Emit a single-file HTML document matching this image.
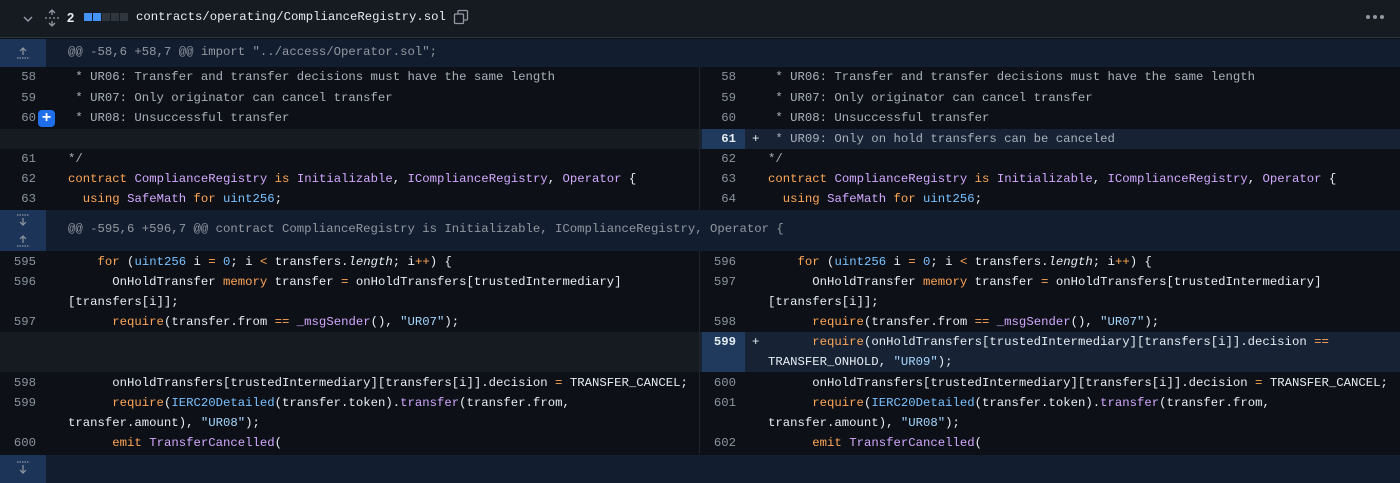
<!DOCTYPE html>
<html><head><meta charset="utf-8"><style>
*{margin:0;padding:0;box-sizing:border-box}
body{width:1400px;height:483px;background:#0d1117;overflow:hidden;font-family:"Liberation Mono",monospace;font-size:12.3px;color:#e6edf3;position:relative}
.hdr{position:absolute;left:0;top:0;width:1400px;height:38px;background:#161b22;border-bottom:1px solid #30363d}
.hunk{position:absolute;left:0;width:1400px;background:#121d2f;color:#9198a1}
.hunk .g{position:absolute;left:0;top:0;bottom:0;width:46px;background:#1b3458}
.hunk .t{position:absolute;left:68px;}
.r{position:absolute;height:20px;line-height:20px;white-space:pre}
.ln{position:absolute;text-align:right;color:#8b949e;white-space:pre;height:20px;line-height:20px}
.k{color:#ffa657}.p{color:#d2a8ff}.b{color:#79c0ff}.s{color:#a5d6ff}.c{color:#a9b1ba}.i{font-style:italic}
.div{position:absolute;left:699px;width:1px;background:#21262d}
</style></head><body>
<div class="hdr">
 <svg style="position:absolute;left:22px;top:13px" width="12" height="12" viewBox="0 0 12 12"><path d="M2 4l4 4 4-4" stroke="#9198a1" stroke-width="1.5" fill="none"/></svg>
 <svg style="position:absolute;left:44px;top:9px" width="16" height="18" viewBox="0 0 16 18"><path d="M8 1v5M5 4l3-3 3 3M8 17v-5M5 14l3 3 3-3" stroke="#9198a1" stroke-width="1.3" fill="none"/><path d="M1 9h2M5 9h2M9 9h2M13 9h2" stroke="#9198a1" stroke-width="1.3"/></svg>
 <span style="position:absolute;left:67px;top:10px;font-family:'Liberation Sans',sans-serif;font-size:13px;font-weight:bold;color:#e6edf3">2</span>
 <span style="position:absolute;left:84px;top:13px;width:8px;height:8px;background:#4493f8"></span>
 <span style="position:absolute;left:93px;top:13px;width:8px;height:8px;background:#4493f8"></span>
 <span style="position:absolute;left:102px;top:13px;width:8px;height:8px;background:#30363d"></span>
 <span style="position:absolute;left:111px;top:13px;width:8px;height:8px;background:#30363d"></span>
 <span style="position:absolute;left:120px;top:13px;width:8px;height:8px;background:#30363d"></span>
 <span style="position:absolute;left:136px;top:10px;font-size:12.3px;color:#e6edf3">contracts/operating/ComplianceRegistry.sol</span>
 <svg style="position:absolute;left:453px;top:9px" width="16" height="16" viewBox="0 0 16 16"><rect x="1.5" y="5" width="9" height="9.5" rx="1" stroke="#9198a1" stroke-width="1.3" fill="none"/><path d="M5 5V2.5a1 1 0 011-1h7.5a1 1 0 011 1V10a1 1 0 01-1 1H10.5" stroke="#9198a1" stroke-width="1.3" fill="none"/></svg>
 <span style="position:absolute;left:1366px;top:15px;width:4px;height:4px;border-radius:2px;background:#9198a1;box-shadow:7px 0 #9198a1,14px 0 #9198a1"></span>
</div>

<div class="hunk" style="top:39px;height:28px"><div class="g"><svg style="position:absolute;left:15px;top:7px" width="16" height="14" viewBox="0 0 16 14"><path d="M8 9V2M5 5l3-3 3 3" stroke="#9198a1" stroke-width="1.2" fill="none"/><path d="M2 12h12" stroke="#9198a1" stroke-width="1.2" stroke-dasharray="1.5 1"/></svg></div><div class="t" style="top:6px">@@ -58,6 +58,7 @@ import "../access/Operator.sol";</div></div>

<div style="position:absolute;left:0;top:129px;width:699px;height:20px;background:#161b22"></div>
<div style="position:absolute;left:700px;top:129px;width:700px;height:20px;background:#172335"></div>
<div style="position:absolute;left:702px;top:129px;width:43px;height:20px;background:#1f3a5c"></div>
<div style="position:absolute;left:0;top:332px;width:699px;height:40px;background:#161b22"></div>
<div style="position:absolute;left:700px;top:332px;width:700px;height:40px;background:#172335"></div>
<div style="position:absolute;left:702px;top:332px;width:43px;height:40px;background:#1f3a5c"></div>
<div class="div" style="top:67px;height:143px"></div>
<div class="div" style="top:251px;height:203px"></div>

<div class="ln" style="left:0;width:36px;top:67px">58</div>
<div class="ln" style="left:0;width:36px;top:88px">59</div>
<div class="ln" style="left:0;width:36px;top:108px">60</div>
<div style="position:absolute;left:38px;top:110px;width:17px;height:17px;border-radius:4px;background:#1f6feb;color:#fff;font-family:'Liberation Sans',sans-serif;font-size:16px;line-height:16px;text-align:center;font-weight:bold">+</div>
<div class="ln" style="left:0;width:36px;top:149px">61</div>
<div class="ln" style="left:0;width:36px;top:169px">62</div>
<div class="ln" style="left:0;width:36px;top:189px">63</div>
<div class="r c" style="left:68px;top:67px"> * UR06: Transfer and transfer decisions must have the same length</div>
<div class="r c" style="left:68px;top:88px"> * UR07: Only originator can cancel transfer</div>
<div class="r c" style="left:68px;top:108px"> * UR08: Unsuccessful transfer</div>
<div class="r c" style="left:68px;top:149px">*/</div>
<div class="r" style="left:68px;top:169px"><span class="k">contract</span> <span class="p">ComplianceRegistry</span> <span class="k">is</span> <span class="p">Initializable</span>, <span class="p">IComplianceRegistry</span>, <span class="p">Operator</span> {</div>
<div class="r" style="left:68px;top:189px">  <span class="k">using</span> <span class="p">SafeMath</span> <span class="k">for</span> <span class="b">uint256</span>;</div>

<div class="ln" style="left:700px;width:36px;top:67px">58</div>
<div class="ln" style="left:700px;width:36px;top:88px">59</div>
<div class="ln" style="left:700px;width:36px;top:108px">60</div>
<div class="ln" style="left:700px;width:36px;top:129px;color:#e6edf3;font-weight:bold">61</div>
<div class="ln" style="left:700px;width:36px;top:149px">62</div>
<div class="ln" style="left:700px;width:36px;top:169px">63</div>
<div class="ln" style="left:700px;width:36px;top:189px">64</div>
<div class="r c" style="left:768px;top:67px"> * UR06: Transfer and transfer decisions must have the same length</div>
<div class="r c" style="left:768px;top:88px"> * UR07: Only originator can cancel transfer</div>
<div class="r c" style="left:768px;top:108px"> * UR08: Unsuccessful transfer</div>
<div class="r" style="left:752px;top:129px">+</div>
<div class="r c" style="left:768px;top:129px"> * UR09: Only on hold transfers can be canceled</div>
<div class="r c" style="left:768px;top:149px">*/</div>
<div class="r" style="left:768px;top:169px"><span class="k">contract</span> <span class="p">ComplianceRegistry</span> <span class="k">is</span> <span class="p">Initializable</span>, <span class="p">IComplianceRegistry</span>, <span class="p">Operator</span> {</div>
<div class="r" style="left:768px;top:189px">  <span class="k">using</span> <span class="p">SafeMath</span> <span class="k">for</span> <span class="b">uint256</span>;</div>

<div class="hunk" style="top:210px;height:41px"><div class="g"><svg style="position:absolute;left:15px;top:3px" width="16" height="36" viewBox="0 0 16 36"><path d="M2 2h12" stroke="#9198a1" stroke-width="1.2" stroke-dasharray="1.5 1"/><path d="M8 5v7M5 9l3 3 3-3" stroke="#9198a1" stroke-width="1.2" fill="none"/><path d="M8 30v-7M5 26l3-3 3 3" stroke="#9198a1" stroke-width="1.2" fill="none"/><path d="M2 33h12" stroke="#9198a1" stroke-width="1.2" stroke-dasharray="1.5 1"/></svg></div><div class="t" style="top:12px">@@ -595,6 +596,7 @@ contract ComplianceRegistry is Initializable, IComplianceRegistry, Operator {</div></div>

<div class="ln" style="left:0;width:36px;top:252px">595</div>
<div class="ln" style="left:0;width:36px;top:272px">596</div>
<div class="ln" style="left:0;width:36px;top:312px">597</div>
<div class="ln" style="left:0;width:36px;top:373px">598</div>
<div class="ln" style="left:0;width:36px;top:393px">599</div>
<div class="ln" style="left:0;width:36px;top:433px">600</div>
<div class="r" style="left:68px;top:252px">    <span class="k">for</span> (<span class="b">uint256</span> i <span class="k">=</span> <span class="b">0</span>; i <span class="k">&lt;</span> transfers.<span class="i">length</span>; i<span class="k">++</span>) {</div>
<div class="r" style="left:68px;top:272px">      OnHoldTransfer <span class="k">memory</span> transfer <span class="k">=</span> onHoldTransfers[trustedIntermediary]</div>
<div class="r" style="left:68px;top:292px">[transfers[i]];</div>
<div class="r" style="left:68px;top:312px">      <span class="k">require</span>(transfer.from <span class="k">==</span> <span class="p">_msgSender</span>(), <span class="s">"UR07"</span>);</div>
<div class="r" style="left:68px;top:373px">      onHoldTransfers[trustedIntermediary][transfers[i]].decision <span class="k">=</span> TRANSFER_CANCEL;</div>
<div class="r" style="left:68px;top:393px">      <span class="k">require</span>(<span class="b">IERC20Detailed</span>(transfer.token).<span class="p">transfer</span>(transfer.from,</div>
<div class="r" style="left:68px;top:413px">transfer.amount), <span class="s">"UR08"</span>);</div>
<div class="r" style="left:68px;top:433px">      <span class="k">emit</span> <span class="p">TransferCancelled</span>(</div>

<div class="ln" style="left:700px;width:36px;top:252px">596</div>
<div class="ln" style="left:700px;width:36px;top:272px">597</div>
<div class="ln" style="left:700px;width:36px;top:312px">598</div>
<div class="ln" style="left:700px;width:36px;top:332px;color:#e6edf3;font-weight:bold">599</div>
<div class="ln" style="left:700px;width:36px;top:373px">600</div>
<div class="ln" style="left:700px;width:36px;top:393px">601</div>
<div class="ln" style="left:700px;width:36px;top:433px">602</div>
<div class="r" style="left:768px;top:252px">    <span class="k">for</span> (<span class="b">uint256</span> i <span class="k">=</span> <span class="b">0</span>; i <span class="k">&lt;</span> transfers.<span class="i">length</span>; i<span class="k">++</span>) {</div>
<div class="r" style="left:768px;top:272px">      OnHoldTransfer <span class="k">memory</span> transfer <span class="k">=</span> onHoldTransfers[trustedIntermediary]</div>
<div class="r" style="left:768px;top:292px">[transfers[i]];</div>
<div class="r" style="left:768px;top:312px">      <span class="k">require</span>(transfer.from <span class="k">==</span> <span class="p">_msgSender</span>(), <span class="s">"UR07"</span>);</div>
<div class="r" style="left:752px;top:332px">+</div>
<div class="r" style="left:768px;top:332px">      <span class="k">require</span>(onHoldTransfers[trustedIntermediary][transfers[i]].decision <span class="k">==</span></div>
<div class="r" style="left:768px;top:352px">TRANSFER_ONHOLD, <span class="s">"UR09"</span>);</div>
<div class="r" style="left:768px;top:373px">      onHoldTransfers[trustedIntermediary][transfers[i]].decision <span class="k">=</span> TRANSFER_CANCEL;</div>
<div class="r" style="left:768px;top:393px">      <span class="k">require</span>(<span class="b">IERC20Detailed</span>(transfer.token).<span class="p">transfer</span>(transfer.from,</div>
<div class="r" style="left:768px;top:413px">transfer.amount), <span class="s">"UR08"</span>);</div>
<div class="r" style="left:768px;top:433px">      <span class="k">emit</span> <span class="p">TransferCancelled</span>(</div>

<div class="hunk" style="top:455px;height:28px"><div class="g"><svg style="position:absolute;left:15px;top:5px" width="16" height="16" viewBox="0 0 16 16"><path d="M2 2h12" stroke="#9198a1" stroke-width="1.2" stroke-dasharray="1.5 1"/><path d="M8 5v8M5 10l3 3 3-3" stroke="#9198a1" stroke-width="1.2" fill="none"/></svg></div></div>
</body></html>
